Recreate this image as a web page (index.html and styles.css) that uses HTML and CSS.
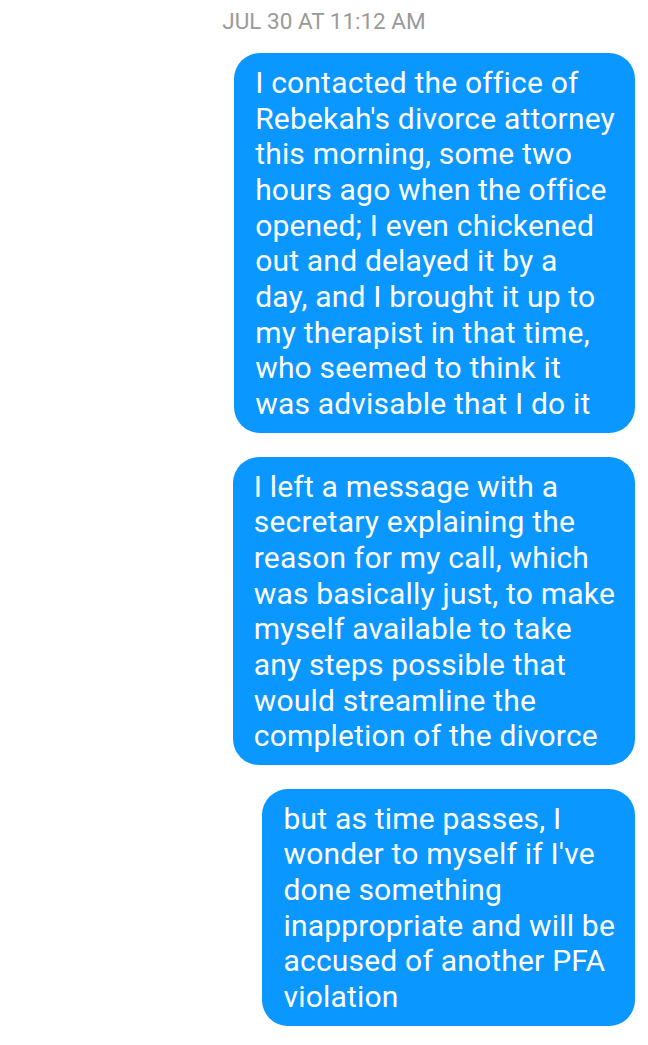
FILE: index.html
```html
<!DOCTYPE html>
<html>
<head>
<meta charset="utf-8">
<link rel="stylesheet" href="styles.css">
</head>
<body>
<div class="thread">
  <div class="stamp">JUL 30 AT 11:12 AM</div>
  <div class="bubble b1">I contacted the office of<br>Rebekah's divorce attorney<br>this morning, some two<br>hours ago when the office<br>opened; I even chickened<br>out and delayed it by a<br>day, and I brought it up to<br>my therapist in that time,<br>who seemed to think it<br>was advisable that I do it</div>
  <div class="bubble b2">I left a message with a<br>secretary explaining the<br>reason for my call, which<br>was basically just, to make<br>myself available to take<br>any steps possible that<br>would streamline the<br>completion of the divorce</div>
  <div class="bubble b3">but as time passes, I<br>wonder to myself if I've<br>done something<br>inappropriate and will be<br>accused of another PFA<br>violation</div>
</div>
</body>
</html>
```

FILE: styles.css
```css
html, body {
  margin: 0;
  padding: 0;
  background: #ffffff;
}
.thread {
  display: flex;
  flex-direction: column;
  align-items: flex-end;
  padding: 8px 0 0 0;
  font-family: Roboto, "Noto Sans", sans-serif;
}
.stamp {
  align-self: center;
  color: #9a9a9a;
  font-size: 22.5px;
  line-height: 26px;
  margin-bottom: 19px;
}
.bubble {
  background: #0a97ff;
  color: #ffffff;
  font-size: 30px;
  line-height: 35.65px;
  letter-spacing: 0.2px;
  border-radius: 26px;
  padding: 12px 20px 11px 21px;
  margin: 0 13px 24px 0;
  white-space: nowrap;
}
```
